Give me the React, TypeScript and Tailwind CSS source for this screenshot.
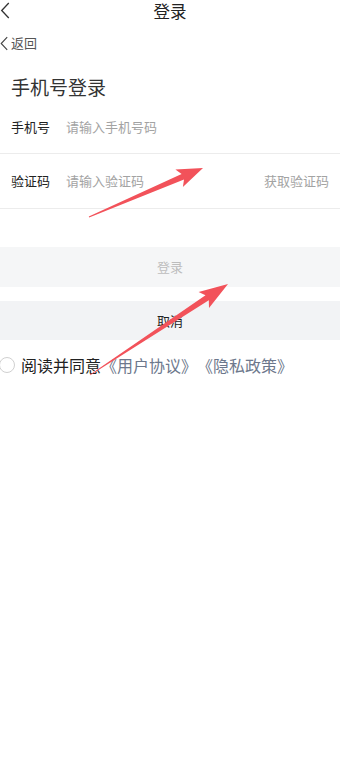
const FONT = { fontFamily: '"Noto Sans CJK SC", "Noto Sans", sans-serif' };

// tapered annotation arrow, tail (x1,y1) -> tip (x2,y2)
function arrowPoints(x1: number, y1: number, x2: number, y2: number, head = 27, half = 9.5) {
  const dx = x2 - x1;
  const dy = y2 - y1;
  const len = Math.hypot(dx, dy);
  const ux = dx / len;
  const uy = dy / len;
  const nx = -uy;
  const ny = ux;
  const at = (d: number, w: number) => [x1 + ux * d + nx * w, y1 + uy * d + ny * w];
  const neck = len - head + 4;
  const base = len - head;
  const pts = [
    at(0, 0.4),
    at(neck, 3),
    at(base, half),
    at(len, 0),
    at(base, -half),
    at(neck, -3),
    at(0, -0.4),
  ];
  return pts.map((p) => p.map((v) => v.toFixed(1)).join(",")).join(" ");
}

function Chevron({ className }: { className?: string }) {
  return (
    <svg viewBox="0 0 10 18" className={className} fill="none" stroke="currentColor" strokeWidth="1.4">
      <path d="M9 1 L1.5 9 L9 17" />
    </svg>
  );
}

function FieldRow({ label, placeholder, action, h }: { label: string; placeholder: string; action?: string; h: string }) {
  return (
    <div className={`flex items-center border-b border-[#ececec] pl-[11px] pr-[11px] ${h}`}>
      <span className="w-[55px] shrink-0 text-[13px] text-[#222]">{label}</span>
      <input
        className="min-w-0 flex-1 bg-transparent text-[13px] text-[#222] outline-none placeholder:text-[#a3a3a3]"
        style={FONT}
        placeholder={placeholder}
      />
      {action && <span className="shrink-0 text-[13px] text-[#a3a3a3]">{action}</span>}
    </div>
  );
}

// book-title link with full-width brackets
function DocLink({ name }: { name: string }) {
  return (
    <span className="text-[#6d788c]">
      <span className="inline-block w-[1em] text-right">《</span>
      {name}
      <span className="inline-block w-[1em] text-left">》</span>
    </span>
  );
}

export default function App() {
  return (
    <div className="relative h-[760px] w-[340px] overflow-hidden bg-white" style={FONT}>
      <header className="relative flex h-[22px] items-center justify-center">
        <Chevron className="absolute left-0 top-[2px] h-[17px] w-[10px] text-[#333]" />
        <span className="text-[16.5px] leading-[20px] text-[#222]">登录</span>
      </header>

      <div className="mt-[10px] flex h-[22px] items-center gap-[3px] text-[#555]">
        <Chevron className="h-[15px] w-[8px] text-[#444]" />
        <span className="text-[13px]">返回</span>
      </div>

      <h1 className="mt-[19px] h-[28px] pl-[11px] text-[19px] leading-[28px] text-[#333]">手机号登录</h1>

      <FieldRow h="h-[53px]" label="手机号" placeholder="请输入手机号码" />
      <FieldRow h="h-[55px]" label="验证码" placeholder="请输入验证码" action="获取验证码" />

      <button className="mt-[38px] flex h-[40px] w-full items-center justify-center bg-[#f5f6f7] text-[13px] text-[#bdbdbd]">
        登录
      </button>
      <button className="mt-[14px] flex h-[39px] w-full items-center justify-center bg-[#f2f3f5] text-[13px] text-[#222]">
        取消
      </button>

      <div className="mt-[14px] flex h-[22px] items-center">
        <span className="ml-[-1px] h-[16px] w-[16px] shrink-0 rounded-full border border-[#d0d0d0]" />
        <span className="ml-[6px] whitespace-nowrap text-[16px] text-[#222]">
          阅读并同意
          <DocLink name="用户协议" />
          <DocLink name="隐私政策" />
        </span>
      </div>

      <svg className="pointer-events-none absolute left-0 top-0" width="340" height="760">
        <polygon points={arrowPoints(89, 217, 203, 168, 26, 9.5)} fill="#f2525a" />
        <polygon points={arrowPoints(90, 375, 228, 284, 29, 9.5)} fill="#f2525a" />
      </svg>
    </div>
  );
}
